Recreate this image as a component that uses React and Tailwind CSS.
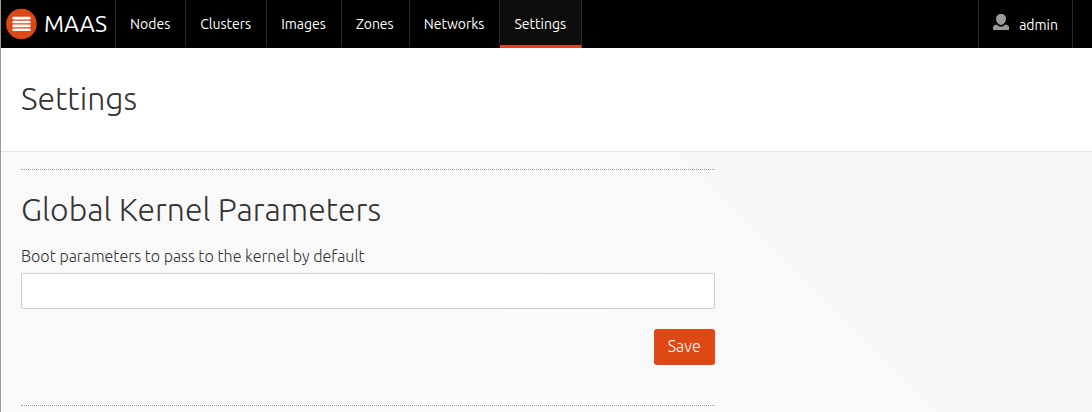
const links = ['Nodes', 'Clusters', 'Images', 'Zones', 'Networks', 'Settings'];

function Logo() {
  return (
    <svg className="size-8" viewBox="0 0 32 32" aria-hidden="true">
      <circle cx="15.4" cy="16" r="15.3" fill="#dd4814" />
      <g fill="#fff">
        <rect x="6.4" y="8.8" width="18.2" height="2.6" rx="0.8" />
        <rect x="6.4" y="12.7" width="18.2" height="2.6" rx="0.8" />
        <rect x="6.4" y="16.600" width="18.2" height="2.6" rx="0.8" />
        <rect x="6.4" y="20.5" width="18.2" height="2.6" rx="0.8" />
      </g>
    </svg>
  );
}

function UserIcon() {
  return (
    <svg className="size-4" viewBox="0 0 16 16" fill="#999" aria-hidden="true">
      <path d="M8 0C5 0 3 2 3 4.800C3 7.600 5.400 11 8 11C10.600 11 13 7.600 13 4.800C13 2 11 0 8 0Z" />
      <path d="M4 10.500C1.500 11 0 11.800 0 13V16H16V13C16 11.800 14.500 11 12 10.500C10.800 12 9.400 12.700 8 12.700C6.600 12.700 5.200 12 4 10.500Z" />
    </svg>
  );
}

function Backdrop() {
  return (
    <svg className="absolute top-0 left-0 -z-10" width="1091" height="260" aria-hidden="true">
      <path d="M674 0H1091V260H934Z" fill="#f8f8f8" />
      <path d="M674 0H718L805 90V132Z" fill="#f7f7f7" />
      <path d="M554 110L708 260H404Z" fill="#fafafa" />
    </svg>
  );
}

export default function App() {
  return (
    <div className="flex min-h-screen flex-col border-l border-[#999] bg-[#f9f9f9] font-['Ubuntu','Noto_Sans',sans-serif] text-[#333]">
      <header className="flex h-12 bg-black text-sm text-white">
        <a href="#home" className="flex items-center gap-1.5 border-r border-[#2a2a2a] pr-2 pl-[5px]">
          <Logo />
          <span className="text-[23px] leading-8">MAAS</span>
        </a>
        <nav className="flex">
          {links.map((name) => (
            <a
              key={name}
              href={'#' + name.toLowerCase()}
              aria-current={name === 'Settings' ? 'page' : undefined}
              className="flex items-center border-r border-b-3 border-r-[#2a2a2a] border-b-transparent pt-0.5 pr-[15px] pl-3.5 aria-[current=page]:border-b-[#dd4814] aria-[current=page]:bg-[#0f0d0b]"
            >
              {name}
            </a>
          ))}
        </nav>
        <a href="#account" className="mr-[19px] ml-auto flex items-center gap-2.5 border-x border-[#2a2a2a] px-3.5">
          <span className="pb-1">
            <UserIcon />
          </span>
          <span className="pt-0.5">admin</span>
        </a>
      </header>

      <div className="border-b border-[#e4e4e4] bg-white px-5 pt-[30px] pb-[33px]">
        <h1 className="text-[32px] leading-10 font-light">Settings</h1>
      </div>

      <main className="relative isolate grow overflow-hidden px-5 pt-[17px]">
        <Backdrop />
        <div className="w-[66%]">
          <form className="border-t border-dotted border-[#999] pt-[19px] pb-10" onSubmit={(e) => e.preventDefault()}>
            <h2 className="text-[32px] leading-10 font-light">Global Kernel Parameters</h2>
            <label htmlFor="kernel" className="mt-[15px] block text-base leading-6 font-light">
              Boot parameters to pass to the kernel by default
            </label>
            <input
              id="kernel"
              type="text"
              className="mt-[5px] block h-9 w-full rounded-xs border border-[#ccc] bg-white px-2 text-base outline-none"
            />
            <button type="submit" className="mt-5 ml-auto block h-9 rounded-[3px] bg-[#dd4814] px-3.5 pb-0.5 text-base font-light text-white">
              Save
            </button>
          </form>
          <hr className="border-t border-dotted border-[#999]" />
        </div>
      </main>
    </div>
  );
}
